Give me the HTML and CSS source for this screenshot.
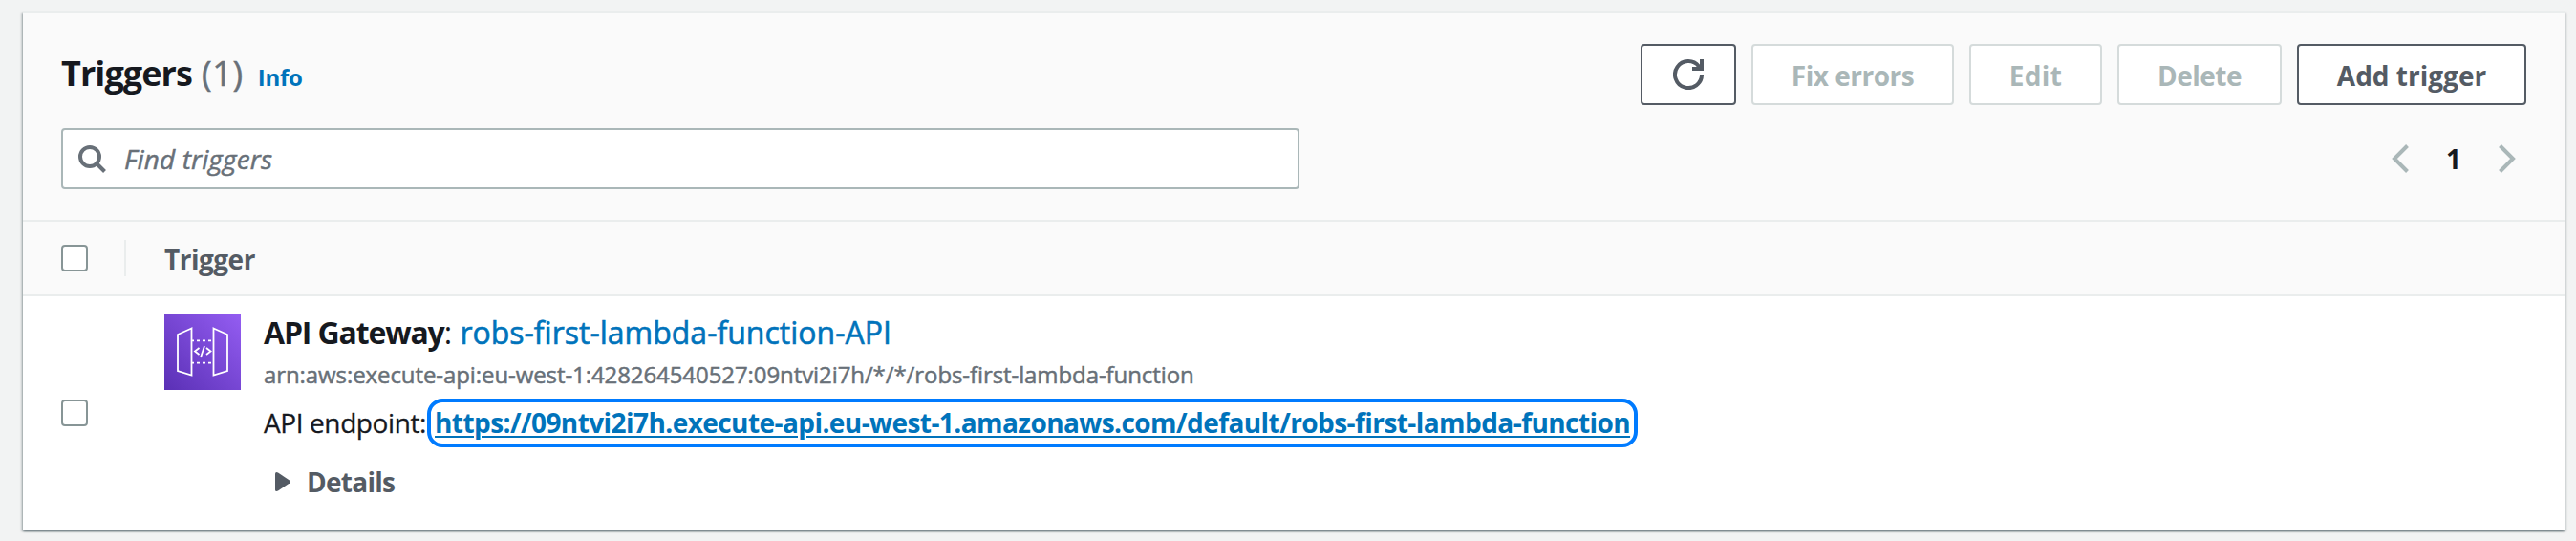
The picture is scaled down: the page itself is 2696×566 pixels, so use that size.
FILE: index.html
```
<!DOCTYPE html>
<html lang="en">
<head>
<meta charset="utf-8">
<title>Triggers</title>
<link rel="stylesheet" href="styles.css">
</head>
<body>
<section class="panel">
  <header class="panel-header">
    <div class="title-row">
      <h2 class="title"><span class="title-text">Triggers</span><span class="count">(1)</span><a class="info">Info</a></h2>
      <div class="actions">
        <button class="btn btn-refresh" aria-label="Refresh">
          <svg width="32" height="32" viewBox="0 0 32 32" fill="none" stroke="currentColor" stroke-width="4"><path d="M30 16A14 14 0 1 1 27 7.400L28.500 9.500"/><path d="M30 0V10H20"/></svg>
        </button>
        <button class="btn btn-fix" disabled>Fix errors</button>
        <button class="btn btn-edit" disabled>Edit</button>
        <button class="btn btn-delete" disabled>Delete</button>
        <button class="btn btn-add">Add trigger</button>
      </div>
    </div>
    <div class="filter-row">
      <div class="search">
        <svg width="32" height="32" viewBox="0 0 32 32" fill="none" stroke="currentColor" stroke-width="4"><circle cx="14" cy="14" r="10"/><path d="M21 21l8.500 8.500"/></svg>
        <span class="placeholder">Find triggers</span>
      </div>
      <nav class="pages">
        <svg width="20" height="32" viewBox="0 0 20 32" fill="none" stroke="currentColor" stroke-width="4"><path d="M17.500 2.500L4 16l13.500 13.500"/></svg>
        <b class="page">1</b>
        <svg width="20" height="32" viewBox="0 0 20 32" fill="none" stroke="currentColor" stroke-width="4"><path d="M2.500 2.500L16 16 2.500 29.500"/></svg>
      </nav>
    </div>
  </header>
  <div class="row head">
    <span class="checkbox"></span>
    <span class="divider"></span>
    <span class="column-name">Trigger</span>
  </div>
  <div class="row item">
    <span class="checkbox"></span>
    <svg class="service-icon" width="80" height="80" viewBox="0 0 80 80" fill="none" stroke="#fff" stroke-width="1.800">
      <defs><linearGradient id="purple" x1="0" y1="1" x2="1" y2="0"><stop offset="0" stop-color="#5a30b5"/><stop offset="1" stop-color="#945df2"/></linearGradient></defs>
      <path d="M0 0h80v80H0z" fill="url(#purple)" stroke="none"/>
      <path d="M28.500 15.500L14 22v38l14.500 4.500zM51.500 15.500L66 22v38l-14.500 4.500z"/>
      <path d="M29 28.300h22M29 51.700h22" stroke-dasharray="3 3" stroke-dashoffset="1"/>
      <path d="M36.500 36l-4.500 3.500 4.500 3.500M44 36l4.500 3.500L44 43M42 34l-4 12"/>
    </svg>
    <div class="trigger">
      <div class="name"><b class="service">API Gateway</b>: <a class="link">robs-first-lambda-function-API</a></div>
      <div class="arn">arn:aws:execute-api:eu-west-1:428264540527:09ntvi2i7h/*/*/robs-first-lambda-function</div>
      <div class="endpoint"><span class="endpoint-label">API endpoint:</span><a class="url">https://09ntvi2i7h.execute-api.eu-west-1.amazonaws.com/default/robs-first-lambda-function</a></div>
      <div class="details">
        <svg width="16" height="20" viewBox="0 0 16 20" fill="currentColor"><path d="M0 1.500Q0 0 1.500 0L3 .500 15.300 8.800Q16.600 10 15.300 11.200L3 19.500 1.500 20Q0 20 0 18.500z"/></svg>
        <span>Details</span>
      </div>
    </div>
  </div>
</section>
</body>
</html>
```
FILE: styles.css
```
* { box-sizing: border-box; }
body {
  margin: 0;
  padding: 12px 12px 12px 24px;
  height: 566px;
  background: #f2f3f3;
  color: #16191f;
  font: 28px/40px "Open Sans", "Noto Sans", sans-serif;
}
svg { display: block; flex: none; }
.panel {
  height: 542px;
  background: #fff;
  border-top: 2px solid #eaeded;
  box-shadow: 0 2px 2px rgba(0, 28, 36, .5), 2px 2px 2px rgba(0, 28, 36, .15), -2px 2px 2px rgba(0, 28, 36, .15);
}
.panel-header {
  height: 218px;
  padding: 32px 40px 0;
  background: #fafafa;
  border-bottom: 2px solid #eaeded;
}
.title-row { display: flex; justify-content: space-between; height: 64px; }
.title { display: flex; align-items: baseline; margin: 0; font-size: 36px; line-height: 62px; }
.title-text { letter-spacing: -.93px; }
.count { margin-left: 10px; color: #687078; font-weight: 400; letter-spacing: .7px; -webkit-text-stroke: .5px; }
.info { margin-left: 15px; color: #0073bb; font-size: 24px; letter-spacing: -.33px; }
.actions { display: flex; gap: 16px; }
.btn {
  display: flex;
  align-items: center;
  justify-content: center;
  height: 64px;
  padding: 1px 0 0;
  background: #fff;
  border: 2px solid #545b64;
  border-radius: 4px;
  color: #545b64;
  font: bold 28px/40px "Open Sans", "Noto Sans", sans-serif;
}
.btn:disabled { border-color: #d5dbdb; color: #aab7b8; }
.btn-refresh { width: 100px; padding: 0; }
.btn-fix { width: 212px; letter-spacing: -.49px; }
.btn-edit { width: 139px; letter-spacing: .3px; }
.btn-delete { width: 172px; letter-spacing: -.5px; }
.btn-add { width: 240px; }
.filter-row { display: flex; justify-content: space-between; align-items: center; margin-top: 24px; }
.search {
  display: flex;
  align-items: center;
  gap: 18px;
  width: 1296px;
  height: 64px;
  padding-left: 14px;
  background: #fff;
  border: 2px solid #aab7b8;
  border-radius: 4px;
  color: #687078;
}
.placeholder { font-style: italic; letter-spacing: .12px; -webkit-text-stroke: .5px; }
.pages { display: flex; align-items: center; padding-right: 10px; color: #aab7b8; }
.page { width: 92px; color: #16191f; text-align: center; }
.row { display: flex; align-items: center; padding-left: 40px; }
.checkbox { width: 28px; height: 28px; background: #fff; border: 2px solid #879596; border-radius: 4px; }
.head { height: 78px; background: #fafafa; border-bottom: 2px solid #eaeded; }
.divider { width: 2px; height: 38px; margin: 0 40px 0 38px; background: #eaeded; }
.column-name { padding-top: 1px; color: #545b64; font-weight: 700; letter-spacing: -.5px; }
.item { height: 244px; }
.service-icon { align-self: flex-start; margin: 18px 24px 0 80px; }
.trigger { margin-bottom: 2px; }
.name { font-size: 32px; }
.service { letter-spacing: -1.15px; }
.link { color: #0073bb; -webkit-text-stroke: .6px; }
.arn { margin-top: 6px; color: #687078; font-size: 24px; line-height: 36px; letter-spacing: -.085px; -webkit-text-stroke: .5px; }
.endpoint { display: flex; align-items: center; height: 64px; }
.endpoint-label { letter-spacing: -.4px; -webkit-text-stroke: .3px; }
.url {
  margin-left: 9px;
  color: #0073bb;
  font-weight: 700;
  letter-spacing: -.568px;
  line-height: 35px;
  text-decoration: underline;
  text-decoration-thickness: 2px;
  text-underline-offset: 3px;
  border-radius: 8px;
  outline: 4px solid #007bff;
  outline-offset: 4px;
}
.details { display: flex; align-items: center; gap: 17px; height: 60px; padding-left: 12px; color: #545b64; font-weight: 700; letter-spacing: -.73px; }
```
